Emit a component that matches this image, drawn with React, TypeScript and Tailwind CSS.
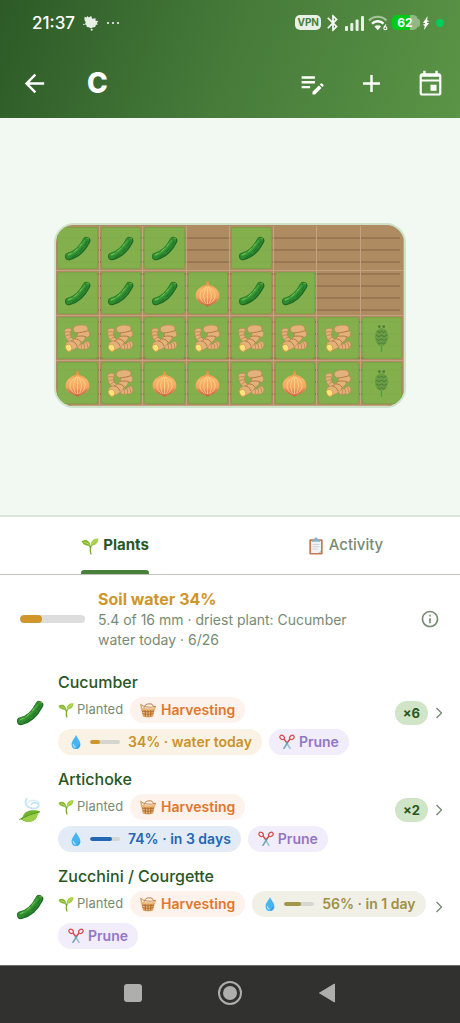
import { useState, type ReactNode } from "react";
import { MdArrowBack, MdAdd, MdBluetooth, MdEditNote, MdInfoOutline } from "react-icons/md";

type Crop = "cucumber" | "onion" | "ginger" | "artichoke" | null;

interface IconProps {
  className?: string;
}

interface Plant {
  name: string;
  icon: "cucumber" | "leaf";
  count?: number;
  water: number;
  due: string;
  tone: keyof typeof tones;
}

const tones = {
  amber: { chip: "bg-[#faf2e5] text-[#c9932c]", bar: "bg-[#cf962b]" },
  blue: { chip: "bg-[#e3ecf6] text-[#2467b3]", bar: "bg-[#2467b3]" },
  olive: { chip: "bg-[#f0f0e6] text-[#9f9148]", bar: "bg-[#a39548]" },
};

const plants: Plant[] = [
  { name: "Cucumber", icon: "cucumber", count: 6, water: 34, due: "water today", tone: "amber" },
  { name: "Artichoke", icon: "leaf", count: 2, water: 74, due: "in 3 days", tone: "blue" },
  { name: "Zucchini / Courgette", icon: "cucumber", water: 56, due: "in 1 day", tone: "olive" },
];

const beds: Crop[] = [
  "cucumber", "cucumber", "cucumber", null, "cucumber", null, null, null,
  "cucumber", "cucumber", "cucumber", "onion", "cucumber", "cucumber", null, null,
  "ginger", "ginger", "ginger", "ginger", "ginger", "ginger", "ginger", "artichoke",
  "onion", "ginger", "onion", "onion", "ginger", "onion", "ginger", "artichoke",
];

function Cucumber({ className }: IconProps) {
  return (
    <svg viewBox="0 0 28 28" className={className} fill="none" strokeLinecap="round" aria-hidden="true">
      <path d="M5 22.2C12 20.6 18.500 15.500 23.300 6" stroke="#1d6a25" strokeWidth="8" />
      <path d="M4.800 21.800C11.500 20 18 14.800 22.800 5.700" stroke="#2e8b30" strokeWidth="6.400" />
      <path d="M4.500 21C10.500 19 16.500 13.500 21.300 6" stroke="#43a03a" strokeWidth="2" />
      <path d="M4.500 20.500l3-1.400M11 17l3-2.800M16.500 11.500l1.800-2.200" stroke="#79c455" strokeWidth="1" />
      <path d="M8.500 23l5-3M16 17.500l4-4.500M21.500 11l2.300-4" stroke="#1f6f27" strokeWidth="1" />
      <path d="M23.800 3.500l1.500.3" stroke="#6a9f35" strokeWidth="1.500" />
    </svg>
  );
}

function Onion({ className }: IconProps) {
  return (
    <svg viewBox="0 0 28 28" className={className} fill="none" aria-hidden="true">
      <defs>
        <linearGradient id="onion" x1="0" y1="0" x2="0" y2="1">
          <stop offset="0" stopColor="#e78935" />
          <stop offset=".35" stopColor="#f8b568" />
          <stop offset=".65" stopColor="#f3a35f" />
          <stop offset="1" stopColor="#c95f43" />
        </linearGradient>
      </defs>
      <path d="M13 .5l1 1 1-1 .5 4.300c6 1.700 10.800 5.500 10.800 11.200 0 4.700-3.600 8.200-8.800 9.700L14 28l-3.500-2.300C5.300 24.200 1.700 20.700 1.700 16c0-5.700 4.800-9.500 10.800-11.200z" fill="url(#onion)" />
      <path d="M13.500 7C7.500 10 5.500 14 6.500 18.200c.6 2.600 2.300 4.800 4.700 6.300M13.800 7c-3.300 4-4.200 7.500-3.600 11.500.4 2.700 1.300 4.700 2.600 6.300M14.300 7c3.300 4 4.200 7.500 3.600 11.500-.4 2.700-1.300 4.700-2.600 6.300M14.700 7c6 3 7.900 7 6.800 11.200-.7 2.600-2.300 4.800-4.800 6.300M14 8v17" stroke="#ffdc98" strokeWidth=".9" opacity=".8" />
      <path d="M3.800 19.500c1.600 2.600 4.200 4.200 7.200 5.200M24.200 19.500c-1.600 2.600-4.200 4.200-7.200 5.200" stroke="#d66d4b" strokeWidth=".8" />
    </svg>
  );
}

function Ginger({ className }: IconProps) {
  return (
    <svg viewBox="0 0 28 28" className={className} fill="none" aria-hidden="true">
      <g fill="#e3b17b" stroke="#bd8350" strokeWidth=".6" strokeLinejoin="round">
        <path d="M.6 5.500c0-1.700 5.400-3 6.700-1.300.7 1.500-.8 2.800-.7 5.300.3 2.500 1.600 4 3.400 5.700l-3 3C3.500 16.500 1.300 13.500 1 10c-.2-1.500-.6-3-.4-4.500z" />
        <path d="M14 22.500c.3-2.500 2.500-3.300 4.500-2.800 1.800.5 2.500-.7 3.300-2 1.200-1.300 3.700-1 4.700.8 1 2.300 0 4.700-1.800 5.700-1.600 1-3.200.8-4.200.8-2.500.7-6 .5-6.500-2.500z" />
        <path d="M10.500 2C13-.2 21-.5 24 1.300c1 1 .7 3.700.6 5 2.300.2 2.700 5 .6 6-1.300.6-2.500 0-3.200-.7.500 3-1.500 5-4.500 6.700-1 3-4 5.500-9.500 8L1.500 19.700c1-2 3.500-3 5.500-3.200 2.500-.5 4.300-1.500 5.500-3.500.8-1.700 2.200-3 1.500-4.700-1.500-.3-3.500-1-4-2.500-.4-1.500-.3-2.800.5-3.800z" />
      </g>
      <path d="M.9 7.800c1.700-1 3.700-1.200 5.700-.4M1.500 11.500c1.600-1.200 3.500-1.500 5.500-1M3.700 15.200c.9-1.500 2.500-2.400 4.500-2.500" stroke="#bd8350" strokeWidth=".9" />
      <path d="M13.500 8.200c3.500-.2 7.500-1 11-2.200M13 11.800c3-.4 6.500-.6 9.300.2M11.500 14.500c2.500-.2 4.700 1 6.300 3.500M7 16.500c3 .2 5.500 2.200 6.500 5.500" stroke="#b4773f" strokeWidth="1" />
      <path d="M17.200 19.800c1 1.300 1.200 3.200.7 5M20.300 19.300c1.200 1.500 1.400 3.500.7 5.400M22.500 17.700c1.500 1.200 2.200 3 1.900 5.400" stroke="#bd8350" strokeWidth=".9" />
      <ellipse cx="4.800" cy="23.600" rx="3.200" ry="3.800" transform="rotate(-30 4.800 23.600)" fill="#ffe27a" stroke="#d5964d" strokeWidth=".8" />
    </svg>
  );
}

function ArtichokeBud({ className }: IconProps) {
  return (
    <svg viewBox="0 0 28 28" className={className} fill="none" aria-hidden="true">
      <path d="M14 21v7" stroke="#4ba33f" strokeWidth="1.300" />
      <ellipse cx="14" cy="12.300" rx="7" ry="9.300" fill="#5f953f" opacity=".7" />
      <g fill="#4f7b38">
        <circle cx="11.700" cy="1.600" r="1.400" />
        <circle cx="16.300" cy="1.600" r="1.400" />
      </g>
      <path d="M9.500 6.500l2.200 1.300L14 6.500l2.300 1.300 2.200-1.300M8.500 10.500l2.700 1.600 2.800-1.600 2.800 1.600 2.700-1.600M8.500 14.500l2.700 1.600 2.800-1.600 2.800 1.600 2.700-1.600M10 18.300l2 1.300 2-1.300 2 1.300 2-1.300" stroke="#4a7838" strokeWidth="1" />
    </svg>
  );
}

function Seedling({ className }: IconProps) {
  return (
    <svg viewBox="0 0 18 18" className={className} fill="none" aria-hidden="true">
      <path d="M10 17c-1.300-3-.7-6 .4-8.700M9.600 12C9.300 9 7.500 7.200 5 6" stroke="#77a82a" strokeWidth="1.300" strokeLinecap="round" />
      <path d="M.5 4.500C4 1.500 8.500 3 9.500 8.500 5.500 9.300 2.300 8 .5 4.500z" fill="#84b82e" />
      <path d="M9.800 8.500C9.600 4 12.500 1 17.500 1.500c-.3 4.500-3 7.300-7.700 7z" fill="#a3cc45" />
      <path d="M3 5.300c2.200.3 4 1.200 5.500 2.700M11 7.300c1.200-2 2.800-3.500 5-4.700" stroke="#cfe57e" strokeWidth=".8" />
    </svg>
  );
}

function Clipboard({ className }: IconProps) {
  return (
    <svg viewBox="0 0 18 18" className={className} fill="none" aria-hidden="true">
      <rect x="2.300" y="2.200" width="13.400" height="15.300" rx="1" fill="#c57b50" />
      <path d="M4 4h10v12H4z" fill="#eff3f5" />
      <path d="M11.500 16l2.500-2.600V16z" fill="#b8c4ca" />
      <path d="M5.500 7.500h7M5.500 9.700h7M5.500 11.900h5" stroke="#c5d0d6" strokeWidth=".8" />
      <path d="M5 4.800V3.200c1.200 0 2-.3 2.200-1.200C7.500.8 8.200.5 9 .5s1.500.3 1.800 1.500c.2.900 1 1.200 2.200 1.200v1.600z" fill="#86b4c8" />
    </svg>
  );
}

function Basket({ className }: IconProps) {
  return (
    <svg viewBox="0 0 18 18" className={className} fill="none" aria-hidden="true">
      <path d="M4.500 7.500C4.500 3.500 8 1 13.500 2.500L16 6" stroke="#b7753a" strokeWidth="1.100" />
      <path d="M.8 2.500l1 5.500h14.400l1.300-3.500M.8 2.500c2 3 11 4.500 16.500 2.300" stroke="#c98645" strokeWidth="1.100" />
      <path d="M1.200 7.200L3.200 16c1.800 1.500 9.800 1.500 11.600 0l2-8.800c-4 1.500-11.600 1.500-15.600 0z" fill="#e0a05a" />
      <path d="M2.200 10.200c4 1.400 9.600 1.400 13.600 0M2.900 13c3.600 1.300 8.600 1.300 12.200 0M5.700 9l.8 7.500M9 9.300V17M12.300 9l-.8 7.500" stroke="#9c5f30" strokeWidth=".8" />
      <path d="M1.300 7.400c4 1.700 11.400 1.700 15.400 0" stroke="#f3bb75" strokeWidth="1.300" strokeLinecap="round" />
      <path d="M3.700 11.700l1.300.2M7 12.300h1.400M10 12.300h1.400M6.800 14.800h1.400M10 14.800h1.200" stroke="#ffd38b" strokeWidth="1" />
    </svg>
  );
}

function Drop({ className }: IconProps) {
  return (
    <svg viewBox="0 0 18 18" className={className} fill="none" aria-hidden="true">
      <path d="M9 1c1.500 4 5 6.500 5 10.700C14 15 11.700 17 9 17s-5-2-5-5.300C4 7.500 7.500 5 9 1z" fill="#45b4f1" />
      <path d="M6 11.500c0 1.800.8 2.800 2 3.300" stroke="#b9e7ff" strokeWidth="1.300" strokeLinecap="round" />
      <path d="M12.500 12.500c-.2 1.500-1 2.500-2.200 3" stroke="#2692d4" strokeWidth="1" strokeLinecap="round" />
    </svg>
  );
}

function Scissors({ className }: IconProps) {
  return (
    <svg viewBox="0 0 18 18" className={className} fill="none" aria-hidden="true">
      <path d="M6 6.500l3 2.300 4.800 8.200-2.200-.5L7.600 10z" fill="#9ac1cf" />
      <path d="M12 6.500L9 8.800 4.200 17l2.200-.5 4-6.500z" fill="#72a5b7" />
      <path d="M5.500 5.500L8.300 9M12.500 5.500L9.700 9" stroke="#d74748" strokeWidth="1.600" />
      <ellipse cx="3.500" cy="3.800" rx="2.700" ry="2.100" transform="rotate(35 3.500 3.800)" stroke="#d74748" strokeWidth="1.400" />
      <ellipse cx="14.500" cy="3.800" rx="2.700" ry="2.100" transform="rotate(-35 14.500 3.800)" stroke="#d74748" strokeWidth="1.400" />
      <circle cx="9" cy="9.700" r=".8" fill="#4d7888" />
    </svg>
  );
}

function LeafInWind({ className }: IconProps) {
  return (
    <svg viewBox="-4 0 31 28" className={className} fill="none" aria-hidden="true">
      <path d="M8 1.500C4.500 6 7.500 11 13 12c5 .8 8.500-.8 8.300-3.500-.3-2.800-6-3.600-8.300-.8" stroke="#c3e3f5" strokeWidth="1.900" strokeLinecap="round" />
      <path d="M8.500 6c3-2.700 9.500-3.700 13-.5" stroke="#d8edf8" strokeWidth="1.500" strokeLinecap="round" />
      <path d="M22.500 15.500C18 13.500 7 13 4 20c-.6 1.900-1.700 3-3.200 3.600C4 27.300 13.300 29 17.800 24c2-2.300 1.500-5.500 4.700-8.500z" fill="#6fb42c" />
      <path d="M22.500 15.500C16 17.500 9 19.500 2.500 24.200c5 3.300 12 3.300 15.300-.2 2-2.300 1.500-5.500 4.700-8.500z" fill="#9bcd46" />
      <path d="M0 24.500c6-2.800 12-6 22-8.300" stroke="#4f911f" strokeWidth="1" strokeLinecap="round" />
    </svg>
  );
}

function CalendarIcon({ className }: IconProps) {
  return (
    <svg viewBox="0 0 24 24" className={className} fill="currentColor" aria-hidden="true">
      <path
        fillRule="evenodd"
        d="M19 3.500h-1V1.500h-2v2H8v-2H6v2H5c-1.100 0-2 .9-2 2V20c0 1.100.9 2 2 2h14c1.100 0 2-.9 2-2V5.500c0-1.100-.9-2-2-2zM19.200 20c0 .2-.1.300-.3.300H5.100c-.2 0-.3-.1-.3-.3V10.300h14.400zM19.200 8.600H4.800V6.500h14.400zM12 13h5v5h-5z"
      />
    </svg>
  );
}

const cropIcons = { cucumber: Cucumber, onion: Onion, ginger: Ginger, artichoke: ArtichokeBud };

function StatusBar() {
  return (
    <div className="flex h-11 items-center justify-between pt-px pr-4 pl-8">
      <div className="flex items-center gap-2">
        <span className="text-[17px] leading-6 font-medium">21:37</span>
        <svg viewBox="0 0 16 16" className="h-4 w-4" fill="#e8efe6" aria-hidden="true">
          <path d="M1.500 1.800l2 .7L4.500 1l1.200 1.500L8.200 1l1 2.700 3.500-.5-.3 2.300 3 .8-1.600 1.700L15 9.500l-2 .3-.8 2.200-2.700.5-1.500 1-2.200-1.200-2-.2-.3-1.800-1.500-1 .7-2L1.500 5z" />
          <circle cx=".9" cy="9.500" r=".8" />
          <circle cx="8.700" cy="14.700" r="1" />
        </svg>
        <span className="flex gap-[3px]">
          <i className="size-0.5 rounded-full bg-white" />
          <i className="size-0.5 rounded-full bg-white" />
          <i className="size-0.5 rounded-full bg-white" />
        </span>
      </div>
      <div className="flex items-center gap-0.5">
        <span className="rounded-[5px] bg-[#e9f0e5] px-0.5 text-[10px] leading-[15px] font-bold text-[#4b7f3d]">VPN</span>
        <MdBluetooth className="size-5" />
        <svg viewBox="0 0 20 16" className="h-4 w-5" fill="#e9f0e5" aria-hidden="true">
          <rect x="0" y="11" width="3" height="5" rx="1" />
          <rect x="5.300" y="8" width="3" height="8" rx="1" />
          <rect x="10.600" y="4.500" width="3" height="11.500" rx="1" />
          <rect x="16" y="1" width="3" height="15" rx="1" />
        </svg>
        <svg viewBox="0 0 22 18" className="h-[18px] w-[22px]" fill="none" aria-hidden="true">
          <path d="M2 6.500c4.800-5 12.700-5 17.500 0" stroke="#a6c49b" strokeWidth="2.200" />
          <path d="M5 9.700c3.200-3.200 8.300-3.200 11.500 0" stroke="#fff" strokeWidth="2.400" />
          <path d="M7.500 12.500c1.800-1.700 4.700-1.700 6.500 0l-3.200 3.700z" fill="#fff" />
          <path d="M19 10.500l-1.800 2.800" stroke="#fff" strokeWidth="1.200" />
          <circle cx="18.300" cy="14.200" r="1.500" stroke="#fff" strokeWidth="1.100" />
        </svg>
        <span className="ml-px flex items-center">
          <span className="w-[26px] rounded-[5px] bg-linear-to-r from-[#00ca18] from-70% to-[#93b886] to-70% text-center text-xs leading-[15px] font-bold">62</span>
          <i className="h-2 w-0.5 rounded-r-full bg-[#93b886]" />
        </span>
        <svg viewBox="0 0 8 14" className="h-3.5 w-2" fill="#fff" aria-hidden="true">
          <path d="M5.500 0L1 7h2.300l-1 1.500H.5L2.700 10 2 14l5-7H4.800l.7-1.500h2L5.200 4z" />
        </svg>
        <i className="ml-1 size-2 rounded-full bg-[#00ce5c]" />
      </div>
    </div>
  );
}

function Header() {
  return (
    <header className="bg-linear-[110deg] from-[#2d5a27] via-[#467b3a] via-50% to-[#5b9446] text-white">
      <StatusBar />
      <div className="flex h-[74px] items-center pt-1 pr-[15px] pl-5">
        <button aria-label="Back">
          <MdArrowBack className="size-[29px]" />
        </button>
        <h1 className="ml-[38px] flex-1 text-[28px] leading-8 font-extrabold">C</h1>
        <div className="flex gap-[30px]">
          <button aria-label="Edit notes"><MdEditNote className="size-[29px]" /></button>
          <button aria-label="Add plant"><MdAdd className="size-[29px]" /></button>
          <button aria-label="Calendar"><CalendarIcon className="size-[29px]" /></button>
        </div>
      </div>
    </header>
  );
}

function GardenBed() {
  return (
    <section className="border-b-2 border-[#d9e8d5] bg-[#f2f9f2] px-[54px] pt-[105px] pb-[107px]">
      <div className="relative overflow-hidden rounded-[20px] border-2 border-[#cde3ca] bg-[#af8b61] pt-px">
        <div className="absolute inset-x-1 top-0.5 bottom-0 bg-[repeating-linear-gradient(to_bottom,transparent_0_10px,#9a7752_10px_12px)]" />
        <div className="relative grid grid-cols-8">
          {beds.map((crop, i) => {
            const Icon = crop && cropIcons[crop];
            return (
              <div key={i} className="h-[45px] border-r border-b border-[#c5a27f] p-px">
                {Icon && (
                  <div className="flex h-full items-center justify-center rounded-[3px] border border-[#7aa547] bg-[#80b34b]/90">
                    <Icon className="size-[27px]" />
                  </div>
                )}
              </div>
            );
          })}
        </div>
      </div>
    </section>
  );
}

function Tabs() {
  const [active, setActive] = useState("Plants");
  const items = [
    { label: "Plants", Icon: Seedling },
    { label: "Activity", Icon: Clipboard },
  ];

  return (
    <div role="tablist" className="grid h-[58px] grid-cols-2 border-b border-[#bcc5b8] text-[15px]">
      {items.map(({ label, Icon }) => (
        <button
          key={label}
          role="tab"
          aria-selected={active === label}
          onClick={() => setActive(label)}
          className="flex justify-center"
        >
          <span
            className={`flex h-full flex-col ${
              active === label ? "font-bold text-[#285723]" : "font-medium text-[#778b73]"
            }`}
          >
            <span className="flex flex-1 items-center gap-1 pt-1">
              <Icon className="size-[18px]" />
              {label}
            </span>
            <span className={`h-1 rounded-t-[3px] ${active === label ? "bg-[#48803b]" : "bg-transparent"}`} />
          </span>
        </button>
      ))}
    </div>
  );
}

function Meter({ value, className, barClass }: { value: number; className: string; barClass: string }) {
  return (
    <span className={`block overflow-hidden rounded-full ${className}`}>
      <span className={`block h-full rounded-full ${barClass}`} style={{ width: `${value}%` }} />
    </span>
  );
}

function SoilWater() {
  return (
    <section className="flex items-center px-5 pt-[13px]">
      <Meter value={34} className="h-2 w-[65px] shrink-0 bg-[#dddddd]" barClass="bg-[#cf962b]" />
      <div className="ml-[13px] flex-1">
        <h2 className="text-base leading-[22px] font-bold text-[#cf962b]">Soil water 34%</h2>
        <p className="max-w-[270px] text-sm leading-5 text-[#778b73]">
          5.4 of 16 mm · driest plant: Cucumber water today · 6/26
        </p>
      </div>
      <button aria-label="About soil water" className="text-[#778b73]">
        <MdInfoOutline className="size-5" />
      </button>
    </section>
  );
}

function Chip({ className, children }: { className: string; children: ReactNode }) {
  return (
    <span className={`flex h-[26px] items-center rounded-full text-sm font-semibold whitespace-nowrap ${className}`}>
      {children}
    </span>
  );
}

function PlantRow({ name, icon, count, water, due, tone }: Plant) {
  const Icon = icon === "leaf" ? LeafInWind : Cucumber;

  return (
    <li>
      <button className="flex w-full items-center pt-[7px] pr-[18px] pb-1.5 pl-4 text-left">
        <Icon className="size-7 shrink-0" />
        <span className="ml-3.5 min-w-0 flex-1">
          <span className="block text-base leading-[22px] font-medium text-[#285723]">{name}</span>
          <span className="mt-1 flex flex-wrap gap-x-[7px] gap-y-1.5">
            <span className="flex items-center gap-[3px] text-[13px] text-[#778b73]">
              <Seedling className="size-4" />
              Planted
            </span>
            <Chip className="gap-[5px] bg-[#fdf2ec] px-2.5 text-[#df782b]">
              <Basket className="size-4" />
              Harvesting
            </Chip>
            <Chip className={`gap-1.5 px-2.5 ${tones[tone].chip}`}>
              <Drop className="size-4" />
              <Meter value={water} className="mr-0.5 h-1 w-[30px] bg-[#d5d5d1]" barClass={tones[tone].bar} />
              {water}% · {due}
            </Chip>
            <Chip className="gap-1 bg-[#f1edfa] px-2.5 text-[#9277c4]">
              <Scissors className="size-4" />
              Prune
            </Chip>
          </span>
        </span>
        {count && (
          <span className="ml-2 h-6 rounded-full bg-[#d0e4c8] px-2 text-[13px] leading-6 font-bold text-[#285723]">
            ×{count}
          </span>
        )}
        <svg viewBox="0 0 6 12" className="ml-2 h-3 w-1.5 shrink-0" fill="none" stroke="#778b73" strokeWidth="1.400" aria-hidden="true">
          <path d="M.5 1l5 5-5 5" />
        </svg>
      </button>
    </li>
  );
}

function SystemNav() {
  return (
    <nav className="flex h-[58px] items-center justify-center gap-[76px] border-t border-[#6a6f68] bg-[#31312f] pb-1">
      <button aria-label="Recent apps" className="size-[18px] rounded-[3px] bg-[#aeaeac]" />
      <button aria-label="Home" className="flex size-6 items-center justify-center rounded-full border-2 border-[#aeaeac]">
        <i className="size-3.5 rounded-full bg-[#aeaeac]" />
      </button>
      <button aria-label="Back one screen">
        <svg viewBox="0 0 18 20" className="h-5 w-[18px]" fill="#aeaeac" stroke="#aeaeac" strokeLinejoin="round" aria-hidden="true">
          <path d="M1.500 10L16.500 1v18z" />
        </svg>
      </button>
    </nav>
  );
}

export default function App() {
  return (
    <div className="flex min-h-screen flex-col bg-white font-[Inter,sans-serif]">
      <Header />
      <GardenBed />
      <Tabs />
      <main className="flex-1">
        <SoilWater />
        <ul className="mt-3.5">
          {plants.map((plant) => (
            <PlantRow key={plant.name} {...plant} />
          ))}
        </ul>
      </main>
      <SystemNav />
    </div>
  );
}
